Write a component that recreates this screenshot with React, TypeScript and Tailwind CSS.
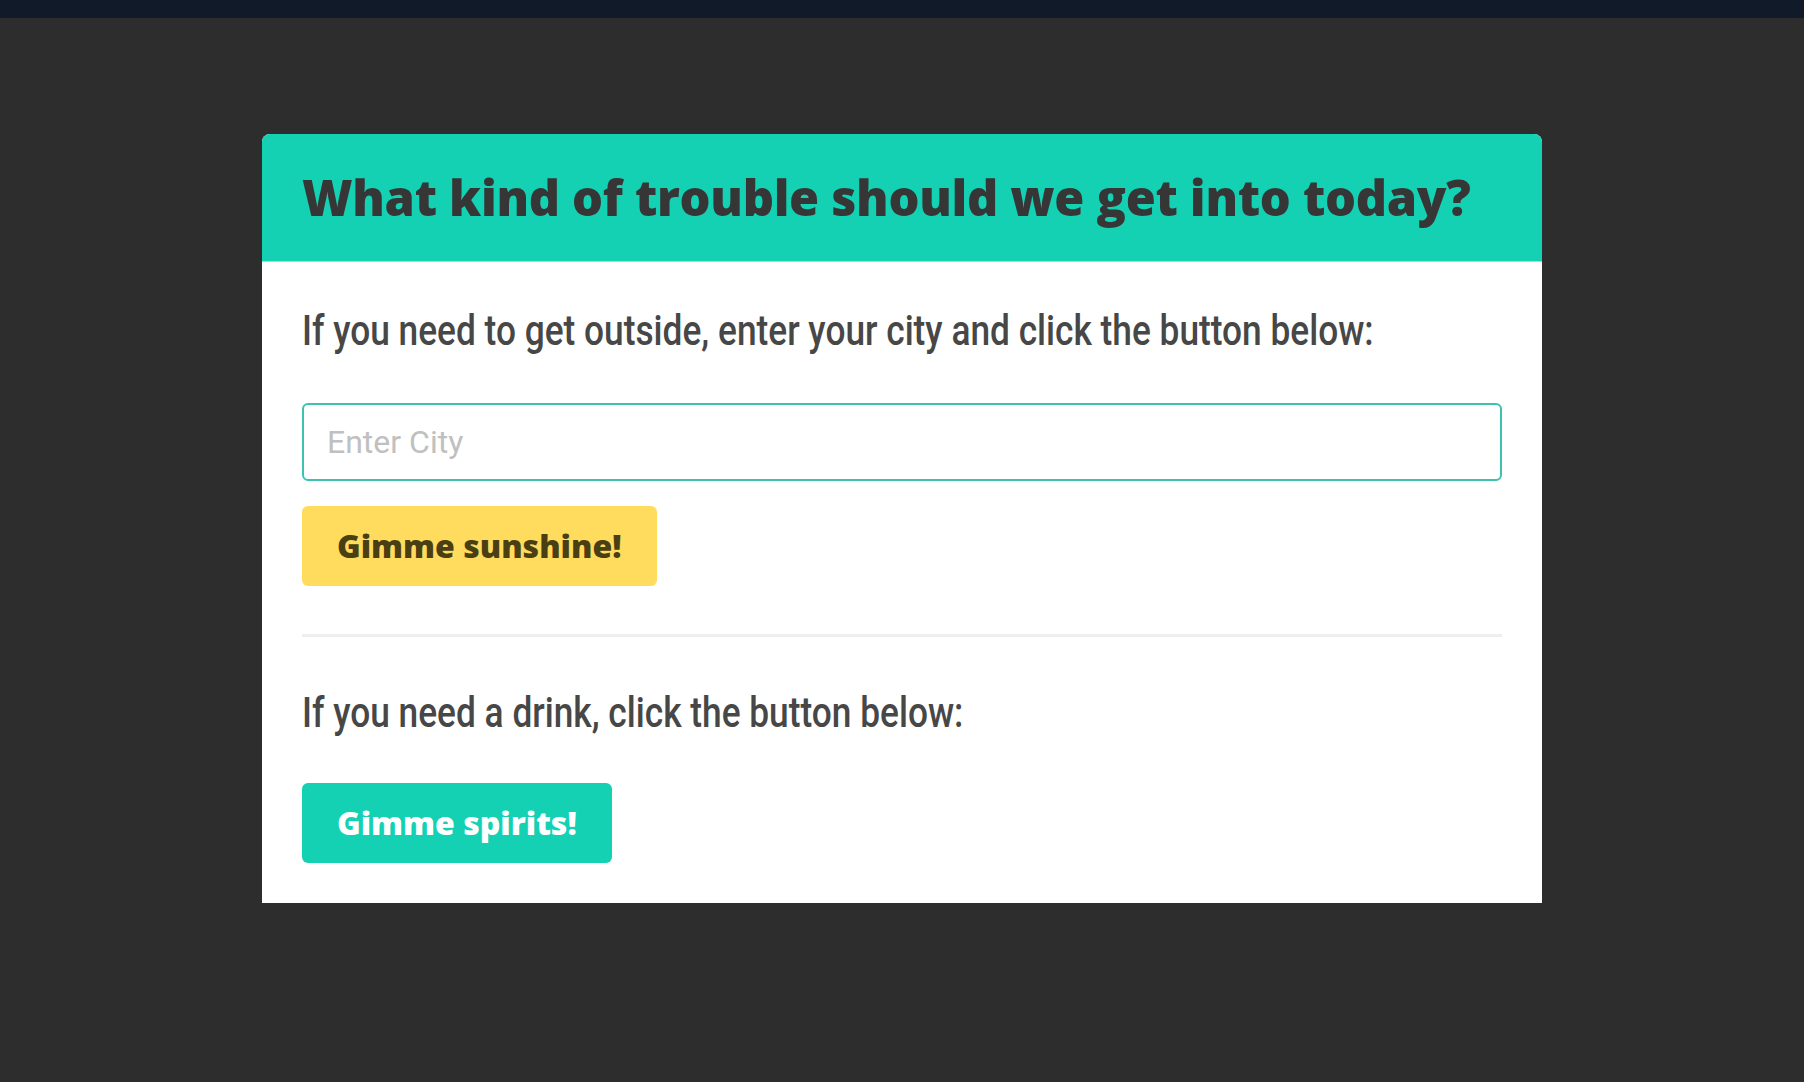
import { useState } from 'react'

export default function App() {
  const [city, setCity] = useState('')

  return (
    <div className="min-h-screen bg-[#2d2d2d]">
      {/* top strip */}
      <div className="h-[18px] bg-[#111a28]" />

      <div className="flex justify-center pt-[116px] pb-10">
        <div className="w-[1280px] overflow-hidden rounded-t-[8px] bg-white">
          <div className="bg-[#14d1b3] border-b border-[#8ee6d9] px-10 pt-[34px] pb-[35px]">
            <h1 className="font-['Open_Sans',sans-serif] text-[48.7px] leading-[58px] font-extrabold text-[#363636] tracking-[-0.3px] whitespace-nowrap">
              What kind of trouble should we get into today?
            </h1>
          </div>

          <div className="px-10 pt-[44px] pb-[40px]">
            <h2 className="h-[48px] font-['Roboto',sans-serif] text-[43px] leading-[48px] font-medium text-[#474747] whitespace-nowrap origin-left scale-x-[0.82]">
              If you need to get outside, enter your city and click the button below:
            </h2>

            <input
              type="text"
              value={city}
              onChange={(e) => setCity(e.target.value)}
              placeholder="Enter City"
              className="mt-[49px] block w-full h-[78px] rounded-[6px] border-2 border-[#3cc2ae] px-[23px] font-['Roboto',sans-serif] text-[32px] font-normal text-[#333] placeholder:text-[#c0c0c0] outline-none"
            />

            <button className="mt-[25px] h-[80px] rounded-[6px] bg-[#ffdc5e] px-[35px] font-['Open_Sans',sans-serif] text-[32px] font-extrabold text-[#4a3f12]">
              Gimme sunshine!
            </button>

            <div className="mt-[48px] h-[3px] bg-[#efefef]" />

            <h2 className="mt-[51px] h-[48px] font-['Roboto',sans-serif] text-[43px] leading-[48px] font-medium text-[#474747] whitespace-nowrap origin-left scale-x-[0.82]">
              If you need a drink, click the button below:
            </h2>

            <button className="mt-[47px] h-[80px] rounded-[6px] bg-[#14d1b3] px-[35px] font-['Open_Sans',sans-serif] text-[32px] font-extrabold text-white">
              Gimme spirits!
            </button>
          </div>
        </div>
      </div>
    </div>
  )
}
